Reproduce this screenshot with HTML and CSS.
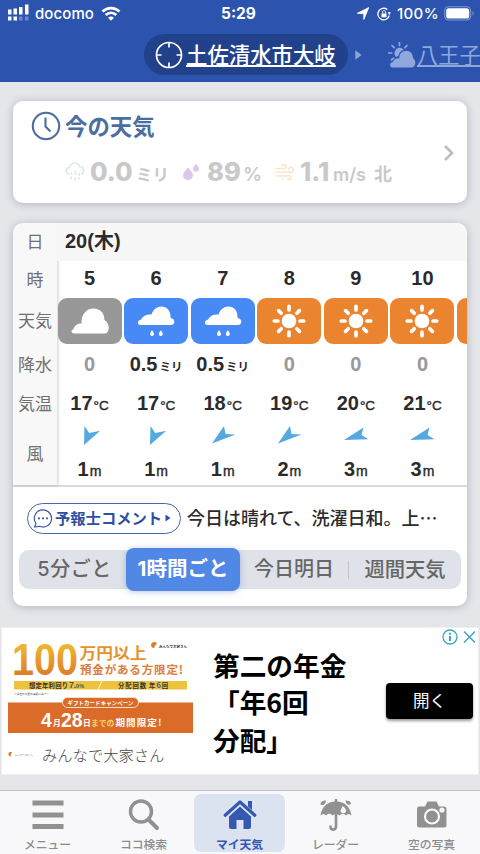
FILE: index.html
```html
<!DOCTYPE html>
<html lang="ja">
<head>
<meta charset="utf-8">
<title>マイ天気</title>
<link rel="stylesheet" href="styles.css">
</head>
<body>
<svg class="defs" width="0" height="0">
  <symbol id="sun" viewBox="0 0 34 34">
    <circle cx="17" cy="17" r="7.3" fill="#fff"/>
    <path d="M17 2.300V6M17 28v3.700M2.300 17H6M28 17h3.700M6.600 6.600l2.600 2.600M24.800 24.800l2.600 2.600M6.600 27.400l2.600-2.600M24.800 9.200l2.600-2.600" stroke="#fff" stroke-width="3.700" stroke-linecap="round"/>
  </symbol>
  <symbol id="cloud" viewBox="0 0 40 28">
    <path d="M4.500 26.500C1 26.500.5 23 3.200 22.400 4.500 18.500 7.500 16.500 11.500 16.600 11 8 16 1.500 23.500 1.500c7 0 11 5 11 11.500C40 16 40.500 26.500 34 26.500z" fill="#fff"/>
  </symbol>
  <symbol id="rain" viewBox="0 0 38 32">
    <path d="M3.500 20C0 20 0 15.200 3.800 14.700 6 10.500 10 9 14.500 9.500 16 4.500 20 1.500 24.500 1.500c5.500 0 9.500 4.500 9 11.500C38.500 13.500 38.500 20 34 20z" fill="#fff"/>
    <path d="M15 25.200c1.500 2 2 2.800 2 3.800a2 2 0 0 1-4 0c0-1 .5-1.800 2-3.800zM23.800 25.200c1.500 2 2 2.800 2 3.800a2 2 0 0 1-4 0c0-1 .5-1.800 2-3.800z" fill="#fff"/>
  </symbol>
  <symbol id="wind-a" viewBox="0 0 26 22"><path d="M7.500 1l4.700 7 11-2.300L7 20z" fill="#55a9e0"/></symbol>
  <symbol id="wind-b" viewBox="0 0 26 22"><path d="M14 1l1.500 8 10 .5L2 18.500z" fill="#55a9e0"/></symbol>
  <symbol id="wind-c" viewBox="0 0 26 22"><path d="M20.500 2.500l-2 7.500 7 4.200L1 15z" fill="#55a9e0"/></symbol>
</svg>

<header class="header">
  <div class="status">
    <svg class="signal" width="23" height="18" viewBox="0 0 23 18" fill="#fff">
      <path d="M1 5.500h3.500v5H1zM6.500 4.500H10v6H6.500zM12 3h3.500v7.500H12zM18 .5h3.500v10H18zM1 12.500h3.500v4H1zM6.500 12.500H10v4H6.500z"/>
      <path opacity=".3" d="M12 12.500h3.500v4H12zM18 12.500h3.500v4H18z"/>
    </svg>
    <span class="carrier">docomo</span>
    <svg class="wifi" width="20" height="16" viewBox="0 0 20 16" fill="none" stroke="#fff" stroke-width="2.700">
      <path d="M1.500 5.500c5-4.600 12-4.600 17 0M4.700 9c3.200-2.900 7.400-2.900 10.600 0"/><path d="M7 11.700c2-1.500 4-1.500 6 0l-3 3z" fill="#fff" stroke="none"/>
    </svg>
    <span class="clock">5:29</span>
    <svg class="loc" width="12" height="13" viewBox="0 0 12 13"><path d="M11.800.5L6.800 12.500V6.800L.3 6.300z" fill="#fff" stroke="#fff" stroke-width=".8" stroke-linejoin="round"/></svg>
    <svg class="lock" width="14" height="14" viewBox="0 0 14 14"><path d="M12.300 8.500A5.800 5.800 0 1 1 10.300 2.500" fill="none" stroke="#fff" stroke-width="1.300"/><path d="M10.500 5.200h3.400l-1.500 2.800zM4.500 6.400h5v3.800h-5z" fill="#fff"/><path d="M5.400 6.500V5.200c0-2 3.200-2 3.200 0v1.300" fill="none" stroke="#fff"/></svg>
    <span class="pct">100%</span>
    <svg class="battery" width="31" height="15" viewBox="0 0 31 15"><rect x=".7" y=".7" width="26" height="13.300" rx="4" fill="none" stroke="#fff" stroke-opacity=".4" stroke-width="1.100"/><rect x="2.200" y="2.300" width="23" height="10.300" rx="2.600" fill="#fff"/><path d="M28.500 5c1.600.7 1.600 4 0 4.700z" fill="#fff" opacity=".4"/></svg>
  </div>
  <nav class="places">
    <div class="place current">
      <svg width="28" height="28" viewBox="0 0 28 28" fill="none" stroke="#fff" stroke-width="1.700"><circle cx="14" cy="14" r="12.500"/><path d="M14 1.500v5M14 21.500v5M1.500 14h5M21.500 14h5"/></svg>
      <span>土佐清水市大岐</span>
    </div>
    <svg class="next-mark" width="7" height="10" viewBox="0 0 7 10"><path d="M.3.300L6.600 5 .3 9.700z" fill="#8fa5d4"/></svg>
    <div class="place other">
      <svg width="28" height="26" viewBox="0 0 28 26" fill="#8fa8dc">
        <path d="M11.500 5.800a5.500 5.500 0 0 1 4.300 2c-3 .9-4.700 3-5.100 5.700-1 .5-1.700 1-2.400 1.800A5.500 5.500 0 0 1 11.500 5.800z"/>
        <path d="M4.500 25.500C1 25 1.500 20.500 4.800 20c1-2.700 3.200-4 6.500-3.800C11.300 11.700 14.300 8.800 18 8.800c4.200 0 7 3 7 7.500 3.500 2 3 9-1.500 9.200z"/>
        <path d="M11.500.5v3M4 3.500l2.200 2.200M.5 11h3.200M3.500 17.800l2-1.500M19 3.500l-2.100 2.200" stroke="#8fa8dc" stroke-width="1.700" stroke-linecap="round"/>
      </svg>
      <span>八王子</span>
    </div>
  </nav>
</header>

<main class="main">
  <section class="card now">
    <div class="now-title">
      <svg width="30" height="30" viewBox="0 0 30 30" fill="none" stroke="#4c6e9f" stroke-width="2.100"><circle cx="15" cy="15" r="13.200"/><path d="M14.500 6.500v9l5 5"/></svg>
      <h1>今の天気</h1>
    </div>
    <div class="now-values">
      <svg class="i-rain" width="20" height="20" viewBox="0 0 20 20" fill="none" stroke="#dfe6ef" stroke-width="1.700" stroke-linecap="round"><path d="M4 12C0 11 .5 5.500 4.500 5.500 6-.3 13-.3 14.500 4.500c5 0 5.500 6 2 7.500M6.500 10.500v1.500M10.500 9v3M14 11.500V13M6 15v1.500M10 15.500V18M14 16v1"/></svg>
      <b class="v1">0.0</b><span class="u1">ミリ</span>
      <svg class="i-drop" width="18" height="18" viewBox="0 0 18 18" fill="#dcc8ea"><path d="M6 4.500C9 8 11 10 11 12.300a5 5 0 0 1-10 0C1 10 3 8 6 4.500zM14 .8c2 2.500 3 3.600 3 5a3 3 0 0 1-6 0c0-1.400 1-2.500 3-5z"/></svg>
      <b class="v2">89</b><span class="u2">%</span>
      <svg class="i-wind" width="20" height="18" viewBox="0 0 20 18" fill="none" stroke="#fae5cd" stroke-width="1.600" stroke-linecap="round"><path d="M1 5.500h8.500c2.500-.5 2-4-.5-4-1 0-1.700.5-2 1.300M1 9.300h14.500c3.500-.3 4-4.600 1-5-1.600-.2-2.800.8-2.800 2.200M2 13h12.500c2 .3 2 3.500-.2 3.500-1 0-1.500-.5-1.800-1M7 16h1"/></svg>
      <b class="v3">1.1</b><span class="u3">m/s</span><span class="u4">北</span>
    </div>
    <svg class="chevron" width="12" height="18" viewBox="0 0 12 18"><path d="M2 2l7 7-7 7" fill="none" stroke="#bdbdbd" stroke-width="2.600"/></svg>
  </section>

  <section class="card forecast">
    <div class="table">
      <div class="labels">
        <span class="r-day">日</span><span class="r-hour">時</span><span class="r-sky">天気</span><span class="r-rain">降水</span><span class="r-temp">気温</span><span class="r-wind">風</span>
      </div>
      <div class="data">
        <div class="date">20(木)</div>
        <div class="hours">
          <div class="hour"><b class="r-hour">5</b><div class="tile gray"><svg width="40" height="28"><use href="#cloud"/></svg></div><div class="r-rain zero"><b>0</b></div><div class="r-temp"><b>17</b><i>°C</i></div><div class="r-arrow"><svg width="26" height="22"><use href="#wind-a"/></svg></div><div class="r-speed"><b>1</b><i>m</i></div></div>
          <div class="hour"><b class="r-hour">6</b><div class="tile blue"><svg width="38" height="32"><use href="#rain"/></svg></div><div class="r-rain"><b>0.5</b><small>ミリ</small></div><div class="r-temp"><b>17</b><i>°C</i></div><div class="r-arrow"><svg width="26" height="22"><use href="#wind-a"/></svg></div><div class="r-speed"><b>1</b><i>m</i></div></div>
          <div class="hour"><b class="r-hour">7</b><div class="tile blue"><svg width="38" height="32"><use href="#rain"/></svg></div><div class="r-rain"><b>0.5</b><small>ミリ</small></div><div class="r-temp"><b>18</b><i>°C</i></div><div class="r-arrow"><svg width="26" height="22"><use href="#wind-b"/></svg></div><div class="r-speed"><b>1</b><i>m</i></div></div>
          <div class="hour"><b class="r-hour">8</b><div class="tile orange"><svg width="34" height="34"><use href="#sun"/></svg></div><div class="r-rain zero"><b>0</b></div><div class="r-temp"><b>19</b><i>°C</i></div><div class="r-arrow"><svg width="26" height="22"><use href="#wind-b"/></svg></div><div class="r-speed"><b>2</b><i>m</i></div></div>
          <div class="hour"><b class="r-hour">9</b><div class="tile orange"><svg width="34" height="34"><use href="#sun"/></svg></div><div class="r-rain zero"><b>0</b></div><div class="r-temp"><b>20</b><i>°C</i></div><div class="r-arrow"><svg width="26" height="22"><use href="#wind-c"/></svg></div><div class="r-speed"><b>3</b><i>m</i></div></div>
          <div class="hour"><b class="r-hour">10</b><div class="tile orange"><svg width="34" height="34"><use href="#sun"/></svg></div><div class="r-rain zero"><b>0</b></div><div class="r-temp"><b>21</b><i>°C</i></div><div class="r-arrow"><svg width="26" height="22"><use href="#wind-c"/></svg></div><div class="r-speed"><b>3</b><i>m</i></div></div>
          <div class="hour"><b class="r-hour"></b><div class="tile orange"></div></div>
        </div>
      </div>
    </div>
    <div class="comment">
      <div class="pill">
        <svg width="20" height="19" viewBox="0 0 20 19"><path d="M3 14.500A8.600 8.600 0 1 1 6.500 17.300L1.500 18z" fill="none" stroke="#3c5aa6" stroke-width="1.200" stroke-linejoin="round"/><path d="M5 8.500h2v1.800H5zM9 8.500h2v1.800H9zM13 8.500h2v1.800h-2z" fill="#3c5aa6"/></svg>
        <span>予報士コメント</span>
        <svg class="tri" width="6" height="8" viewBox="0 0 6 8"><path d="M.5.500L5.500 4 .5 7.500z" fill="#2f4f9f"/></svg>
      </div>
      <p>今日は晴れて、洗濯日和。上…</p>
    </div>
    <div class="segments">
      <span class="seg s1">5分ごと</span><span class="seg on">1時間ごと</span><span class="seg s3">今日明日</span><span class="seg s4">週間天気</span>
    </div>
  </section>

  <section class="ad">
    <div class="ad-left">
      <svg class="creative" width="188" height="104" viewBox="7 637 188 104">
        <defs><linearGradient id="gold" x1="0" y1="0" x2="0" y2="1"><stop offset=".2" stop-color="#f0b92f"/><stop offset="1" stop-color="#d86b25"/></linearGradient></defs>
        <text x="12" y="674.500" class="t-hundred" textLength="66" lengthAdjust="spacingAndGlyphs" fill="url(#gold)">100</text>
        <text x="79.500" y="658.800" class="t-yen" textLength="67" lengthAdjust="spacingAndGlyphs">万円以上</text>
        <text x="80" y="674" class="t-depo" textLength="103">預金がある方限定!</text>
        <path d="M151 645c0-3 4-4 6-2-1 2-2 2-3 5-2 0-3-1-3-3z" fill="#e27a2b"/>
        <text x="159" y="647.500" class="t-brand" textLength="28">みんなで大家さん</text>
        <path d="M14 681h173v8.500H14z" fill="#ebc33f"/><path d="M98 689.500l4-8.500" stroke="#fff6cf"/>
        <text x="29" y="687.800" class="t-rate" textLength="39">想定年利回り</text>
        <text x="69" y="688.300" class="t-pct">7.<tspan class="t-pct-small">0%</tspan></text>
        <text x="118" y="687.800" class="t-rate" textLength="28">分配回数</text>
        <text x="149" y="687.800" class="t-rate" textLength="19">年<tspan class="t-six">6</tspan>回</text>
        <text x="14" y="695" class="t-fine" textLength="35">※過去の分配の実績に基づく</text>
        <path d="M8 702.500h185V733H8z" fill="#da6b28"/>
        <rect x="62.500" y="697.500" width="76" height="10" rx="5" fill="#da6b28" stroke="#f7dfc5"/>
        <text x="67.500" y="705" class="t-gift" textLength="66">ギフトカードキャンペーン</text>
        <text x="41" y="726.500" class="t-num">4</text><text x="53" y="726" class="t-mid">月</text>
        <text x="61" y="726.500" class="t-num">28</text><text x="83" y="726" class="t-mid">日</text>
        <text x="91" y="726" class="t-mid pale">までの</text><text x="115.500" y="726" class="t-limit" textLength="46">期間限定!</text>
      </svg>
      <div class="advertiser">
        <svg width="26" height="7" viewBox="0 0 26 7"><path d="M.5 3c0-2 2-2.500 3.500-1.500C3.200 3 3 3 2.500 5.500 1 5.500.5 4.500.5 3z" fill="#e27a2b"/><text x="6" y="4.800" class="t-tiny" textLength="19">みんなで大家さん</text></svg>
        <span>みんなで大家さん</span>
      </div>
    </div>
    <div class="ad-copy">第二の年金<br>「年6回<br>分配」</div>
    <div class="ad-right">
      <svg class="choices" width="36" height="16" viewBox="0 0 36 16" fill="none" stroke="#3ea4bf" stroke-width="1.300"><circle cx="9" cy="8" r="7"/><path d="M9 3.800v2M9 7v5" stroke-width="2"/><path d="M23 2.500l11 11M34 2.500l-11 11" stroke-width="1.500"/></svg>
      <a class="open">開く</a>
    </div>
  </section>
</main>

<nav class="tabs">
  <div class="tab"><svg width="32" height="32" viewBox="0 0 32 32"><path d="M.5 1.500h31v5H.5zM.5 13.500h31v5H.5zM.5 25h31v5H.5z" fill="#919191"/></svg><span>メニュー</span></div>
  <div class="tab"><svg width="32" height="32" viewBox="0 0 32 32" fill="none" stroke="#919191"><circle cx="13" cy="12.500" r="10.500" stroke-width="3.400"/><path d="M20.500 20.500l8.500 8.500" stroke-width="4" stroke-linecap="round"/></svg><span>ココ検索</span></div>
  <div class="tab active"><svg width="34" height="32" viewBox="0 0 34 32"><path d="M17 7.500l11 10V28a2 2 0 0 1-2 2h-5.500v-9h-7v9H8a2 2 0 0 1-2-2V17.500z" fill="#3558b0"/><path d="M2.200 16.200L17 3l14.800 13.200" fill="none" stroke="#dbe3f1" stroke-width="6"/><path d="M2.200 16.200L17 3l14.800 13.200" fill="none" stroke="#3558b0" stroke-width="3.200" stroke-linecap="round" stroke-linejoin="round"/><path d="M25 2h4v9l-4-3.500z" fill="#3558b0"/></svg><span>マイ天気</span></div>
  <div class="tab"><svg width="34" height="32" viewBox="0 0 34 32"><path d="M17 2.500c9 0 14.500 6 15.500 14-2-2-4-2-5.500 0-2-2.200-4.500-2.200-6.500 0-2.200-2-4.800-2-7 0-2-2.200-4.500-2.200-6.500 0-1.500-2-3.500-2-5.500 0C2.500 8.500 8 2.500 17 2.500z" fill="#919191"/><path d="M17 1v26c0 5-5.500 4.500-5.500.5" fill="none" stroke="#919191" stroke-width="2.600" stroke-linecap="round"/><path d="M1.500 5.500C1.500 2.500 4 1.500 7 1.500 7 5 4 7 1.500 5.500zM26.500 1.500c3 0 5.500 1 5.500 3.500-2 1.500-5 .5-5.500-3.500z" fill="#919191"/><path d="M23.500 7c3 2 4.300 4.500 3.300 6-1.800 2.500-5.800 1-5.300-1.500z" fill="#f8f8fa"/></svg><span>レーダー</span></div>
  <div class="tab"><svg width="32" height="32" viewBox="0 0 32 32"><path d="M3 7.500h6l2.500-5h9l2.500 5h5a2.500 2.500 0 0 1 2.500 2.500v16a2.500 2.500 0 0 1-2.500 2.500H3.500A2.500 2.500 0 0 1 1 26V10a2.500 2.500 0 0 1 2-2.500z" fill="#919191"/><circle cx="16" cy="17.500" r="7" fill="#919191" stroke="#f8f8fa" stroke-width="2.200"/><circle cx="26" cy="11" r="2.600" fill="#f8f8fa"/></svg><span>空の写真</span></div>
</nav>
</body>
</html>
```
FILE: styles.css
```css
* { box-sizing: border-box; }
body {
  margin: 0;
  width: 480px;
  height: 854px;
  overflow: hidden;
  display: flex;
  flex-direction: column;
  background: #e5e6ea;
  font-family: "Liberation Sans", "Noto Sans CJK JP", sans-serif;
  color: #2b2b2b;
  white-space: nowrap;
}
svg { display: block; flex: none; }
.defs { position: absolute; }
i { font-style: normal; }

/* header */
.header { height: 82px; flex: none; background: #2c53ae; color: #fff; overflow: hidden; }
.status { height: 27px; display: flex; align-items: center; padding-left: 7px; font-family: Inter, sans-serif; font-size: 15px; font-weight: 500; }
.signal { margin-bottom: 2px; }
.carrier { width: 60px; margin-left: 5px; letter-spacing: 0.1px; }
.wifi { margin-left: 6px; }
.clock { width: 38px; margin-left: 100px; font-weight: 700; font-size: 15.500px; }
.loc { margin-left: 98px; }
.lock { margin-left: 8px; }
.pct { width: 43px; margin-left: 6px; letter-spacing: 0.35px; }
.battery { margin-left: 4px; }
.places { display: flex; align-items: center; height: 55px; padding-left: 144px; font-family: "Noto Sans CJK JP", sans-serif; }
.place { display: flex; align-items: center; flex: none; text-decoration: underline; text-underline-offset: 2px; text-decoration-thickness: 1.5px; }
.place span { position: relative; top: -1px; }
.current { width: 204px; height: 41px; border-radius: 21px; background: #21418a; padding-left: 11px; gap: 3px; font-size: 21.4px; font-weight: 500; }
.next-mark { margin-left: 7px; }
.other { margin-left: 26px; gap: 1px; color: #8fa8dc; font-size: 21.2px; }

/* cards */
.main { flex: 1; padding: 19px 1px 0; }
.card { margin: 0 12px; background: #fff; border-radius: 10px; box-shadow: 0 1px 8px rgba(70, 75, 90, 0.32); }
.now { position: relative; height: 102px; padding: 10px 0 0 18px; font-family: Inter, "Noto Sans CJK JP", sans-serif; }
.now-title { display: flex; align-items: center; height: 30px; gap: 4px; }
.now-title h1 { margin: -3px 0 0; font: 700 22.4px "Noto Sans CJK JP", sans-serif; color: #4c6e9f; }
.now-values { display: flex; align-items: baseline; height: 34px; margin-top: 14px; padding-left: 34px; line-height: 34px; color: #c9c9c9; }
.now-values svg { align-self: center; }
.now-values b { font-size: 25.500px; font-weight: 800; }
.now-values span { font-size: 18px; font-weight: 600; }
.v1 { width: 46px; margin-left: 5px; }
.u1 { width: 46px; }
.now-values .u1 { font-size: 16.500px; }
.v2 { width: 36px; margin-left: 7px; }
.u2 { width: 32px; }
.now-values .u2 { font-size: 19px; }
.v3 { width: 33px; margin-left: 5px; }
.u3 { width: 41px; }
.chevron { position: absolute; right: 12px; top: 43px; }

.forecast { height: 383px; margin-top: 20px; overflow: hidden; }
.table { display: flex; height: 264px; border-bottom: 2px solid #d9dadd; }
.labels { width: 44px; flex: none; display: flex; flex-direction: column; background: #f8f8f8; color: #707070; font: 400 17px "Noto Sans CJK JP", sans-serif; box-shadow: 1px 0 3px rgba(0, 0, 0, 0.2); }
.labels span { display: flex; align-items: center; justify-content: center; padding-bottom: 3px; }
.labels .r-day { height: 38px; }
.labels .r-sky { height: 46px; }
.labels .r-wind { height: 60px; margin-top: 3px; }
.data { flex: 1; min-width: 0; overflow: hidden; }
.date { height: 38px; padding-left: 8px; background: #f7f7f7; font-size: 20px; font-weight: 700; line-height: 37px; }
.hours { display: flex; }
.hour { width: 66.6px; flex: none; display: flex; flex-direction: column; align-items: center; padding-right: 1.6px; }
.hour b { font-size: 20px; }
.r-hour { height: 37px; line-height: 35px; }
.tile { width: 64px; height: 46px; border-radius: 9px; display: flex; align-items: center; justify-content: center; }
.gray { background: #989898; }
.blue { background: #478af5; }
.orange { background: #eb842e; }
.r-rain { height: 42px; line-height: 41px; }
.r-temp { height: 35px; line-height: 35px; }
.zero { color: #999; }
.r-rain small { margin-left: 2px; font: 700 11.500px "Noto Sans CJK JP", sans-serif; }
.hour i { margin-left: 1px; font-size: 13.500px; -webkit-text-stroke: 0.4px #2b2b2b; }
.r-arrow { margin-top: 4px; height: 21px; }
.r-speed { height: 40px; line-height: 47px; }
.r-speed i { font-size: 14px; }

.comment { display: flex; align-items: center; height: 62px; padding-left: 14px; font-family: "Noto Sans CJK JP", sans-serif; }
.pill { width: 154px; height: 31px; display: flex; align-items: center; gap: 2px; padding-left: 5px; border: 1.500px solid #4765ab; border-radius: 16px; color: #2f4f9f; font-size: 15.300px; font-weight: 700; }
.pill span { margin-top: -2px; }
.pill .tri { margin-left: 1px; }
.comment p { margin: -2px 0 0 6px; font-size: 18px; font-weight: 500; }
.segments { width: 442px; height: 39px; margin: 1px 0 0 6px; display: flex; align-items: center; border-radius: 10px; background: #dfe2e8; color: #666; font: 500 20px/37px Inter, "Noto Sans CJK JP", sans-serif; }
.seg { text-align: center; }
.s1 { width: 107px; padding-left: 4px; font-size: 20px; letter-spacing: 0.5px; }
.on { width: 114px; height: 43px; border-radius: 8px; line-height: 42px; background: #5288e5; color: #fff; font-weight: 700; font-size: 20.500px; box-shadow: 0 1px 6px rgba(60, 100, 180, 0.35); }
.s3 { width: 109px; height: 18px; line-height: 16px; border-right: 1px solid #c3c5ca; }
.s4 { width: 112px; font-size: 20.300px; }

/* ad */
.ad { width: 478px; height: 148px; margin-top: 21px; background: #fff; display: flex; border: 1px solid #eee; font-family: "Noto Sans CJK JP", sans-serif; }
.ad-left { width: 211px; padding: 9px 0 0 5px; }
.advertiser { display: flex; align-items: center; height: 26px; gap: 8px; font-size: 15.300px; font-weight: 300; color: #444; padding-left: 1px; }
.ad-copy { width: 150px; padding-top: 18px; font-size: 26.700px; line-height: 37.300px; font-weight: 700; color: #000; }
.ad-right { flex: 1; display: flex; flex-direction: column; padding-left: 23px; }
.choices { margin: 1px 0 0 55px; }
.open { width: 87px; height: 36px; margin-top: 38px; border-radius: 4px; background: #000; color: #fff; font-size: 16.500px; line-height: 35px; text-align: center; box-shadow: 0 2px 3px rgba(0, 0, 0, 0.4); }
.t-hundred { font: 700 45px "Liberation Sans", sans-serif; }
.t-yen { font-size: 15.500px; font-weight: 700; fill: #e3922c; }
.t-depo { font-size: 11.500px; font-weight: 700; fill: #dc7d38; }
.t-brand { font-size: 3.500px; font-weight: 700; fill: #333; }
.t-rate { font-size: 6.300px; font-weight: 700; fill: #333; }
.t-pct { font: 700 8.500px "Liberation Sans", sans-serif; fill: #3d5d58; }
.t-pct-small { font-size: 5.500px; }
.t-six { fill: #3d5d88; font-size: 8px; }
.t-fine { font-size: 2.600px; fill: #444; }
.t-gift { font-size: 5.500px; font-weight: 700; fill: #fff; }
.t-num { font: 700 19.500px "Liberation Sans", sans-serif; fill: #fff; }
.t-mid { font-size: 7.800px; font-weight: 700; fill: #fff; }
.t-mid.pale { fill: #f9d36b; }
.t-limit { font-size: 9.500px; font-weight: 700; fill: #fff; }
.t-tiny { font-size: 2.500px; fill: #444; }

/* tab bar */
.tabs { height: 64px; flex: none; display: flex; justify-content: space-between; border-top: 1.500px solid #bfc0c3; background: #f8f8fa; color: #8c8c8c; font: 500 11.800px/16px "Noto Sans CJK JP", sans-serif; padding: 3px 3px 0 2px; }
.tab { width: 91px; height: 58px; display: flex; flex-direction: column; align-items: center; padding-top: 5px; gap: 5px; }
.active { border-radius: 7px; background: #dbe3f1; color: #3558b0; font-weight: 700; }
```
